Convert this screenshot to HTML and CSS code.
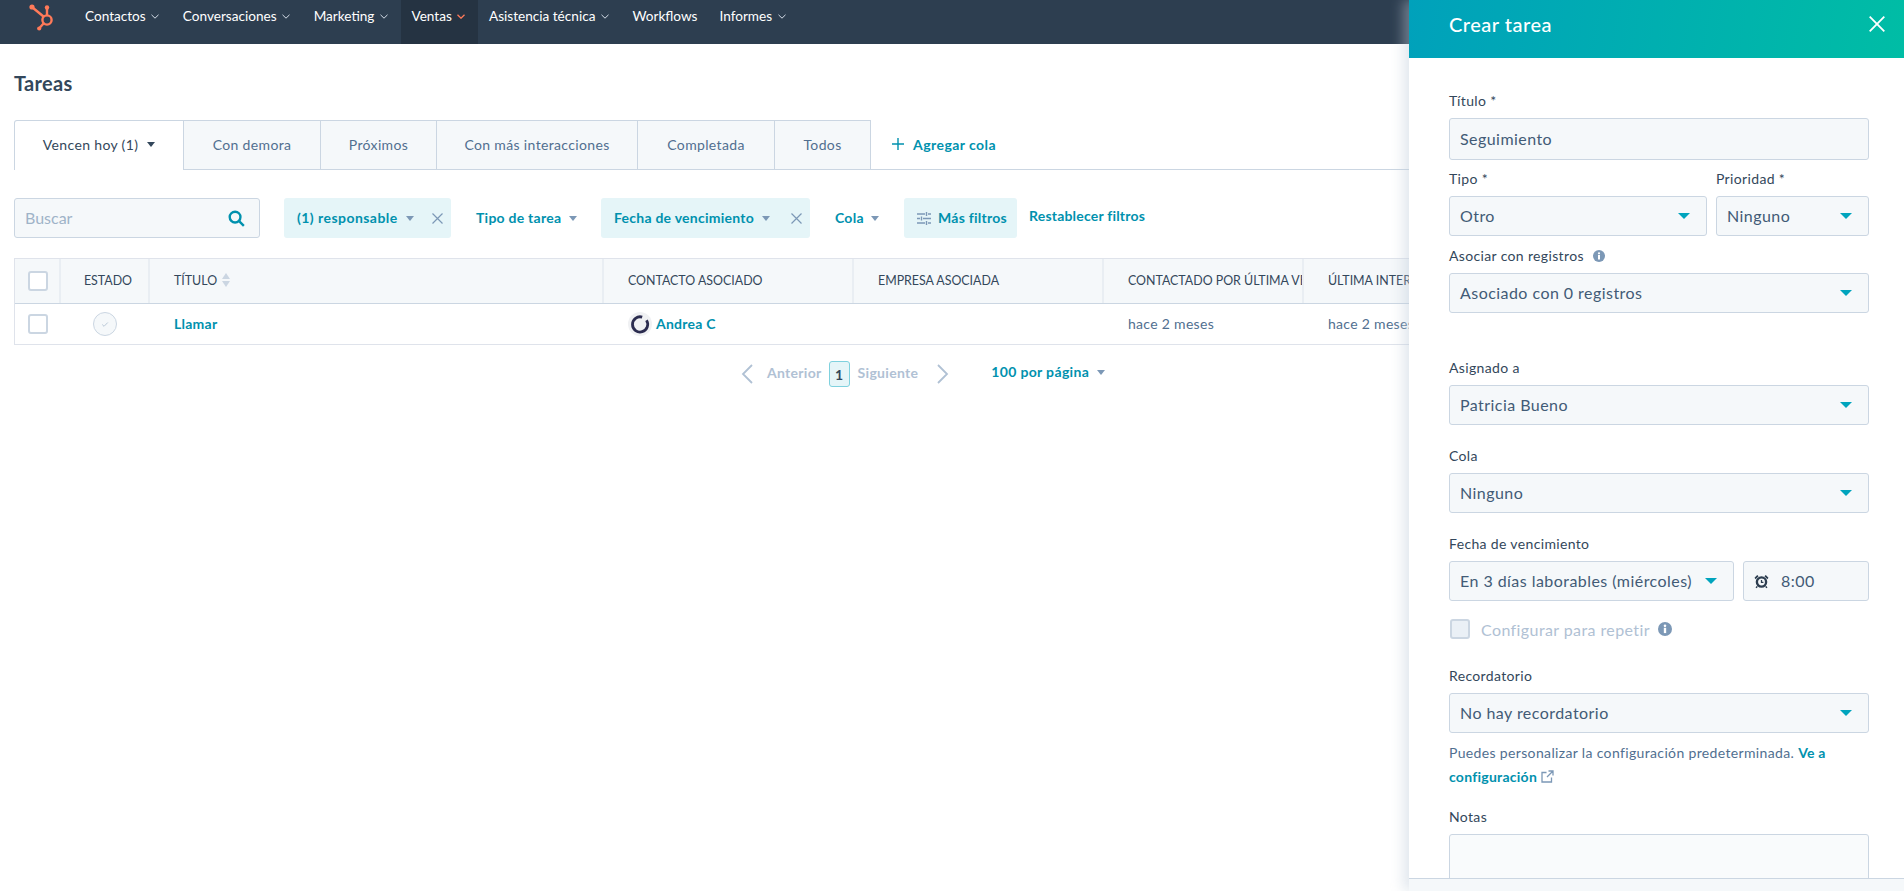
FILE: index.html
```html
<!DOCTYPE html>
<html lang="es">
<head>
<meta charset="utf-8">
<title>Tareas</title>
<link rel="stylesheet" href="styles.css">
</head>
<body>
<header class="nav">
  <svg class="logo" viewBox="0 0 32 30" width="32" height="30"><g fill="none" stroke="#ff7a59" stroke-width="2.4" stroke-linecap="round"><circle cx="21" cy="19" r="4.6"/><path d="M6.5 6.5 17.5 15.5"/><path d="M21 6.5V14"/><path d="M17.5 22.5 13.5 27"/></g><g fill="#ff7a59"><circle cx="6" cy="6" r="2.6"/><circle cx="21" cy="6.5" r="2.2"/><circle cx="13.2" cy="27.5" r="2.1"/></g></svg>
  <nav class="nav-items">
    <a class="nav-item">Contactos <svg class="chev" viewBox="0 0 8 5"><path d="M.5.8 4 4.2 7.5.8"/></svg></a>
    <a class="nav-item">Conversaciones <svg class="chev" viewBox="0 0 8 5"><path d="M.5.8 4 4.2 7.5.8"/></svg></a>
    <a class="nav-item">Marketing <svg class="chev" viewBox="0 0 8 5"><path d="M.5.8 4 4.2 7.5.8"/></svg></a>
    <a class="nav-item active">Ventas <svg class="chev" viewBox="0 0 8 5"><path d="M.5.8 4 4.2 7.5.8"/></svg></a>
    <a class="nav-item">Asistencia técnica <svg class="chev" viewBox="0 0 8 5"><path d="M.5.8 4 4.2 7.5.8"/></svg></a>
    <a class="nav-item nav-plain">Workflows</a>
    <a class="nav-item">Informes <svg class="chev" viewBox="0 0 8 5"><path d="M.5.8 4 4.2 7.5.8"/></svg></a>
  </nav>
</header>

<main class="main">
  <h1 class="title">Tareas</h1>

  <div class="tabs">
    <div class="tab tab-active w1">Vencen hoy (1) <span class="tri tri-dark"></span></div>
    <div class="tab w2">Con demora</div>
    <div class="tab w3">Próximos</div>
    <div class="tab w4">Con más interacciones</div>
    <div class="tab w5">Completada</div>
    <div class="tab w6">Todos</div>
    <a class="add-queue"><svg class="plus" viewBox="0 0 12 12"><path d="M6 0v12M0 6h12"/></svg>Agregar cola</a>
  </div>

  <div class="filters">
    <div class="search"><span>Buscar</span><svg class="search-icon" viewBox="0 0 18 18"><circle cx="7.5" cy="7.5" r="5.7"/><path d="m12 12 4.8 4.8"/></svg></div>
    <div class="filter chip c1">(1) responsable <span class="tri"></span><svg class="x" viewBox="0 0 11 11"><path d="m.5.5 10 10M10.500.5l-10 10"/></svg></div>
    <div class="filter c4">Tipo de tarea <span class="tri"></span></div>
    <div class="filter chip c2">Fecha de vencimiento <span class="tri"></span><svg class="x" viewBox="0 0 11 11"><path d="m.5.5 10 10M10.500.5l-10 10"/></svg></div>
    <div class="filter c5">Cola <span class="tri"></span></div>
    <div class="filter chip c3"><svg class="sliders" viewBox="0 0 14 13"><path d="M0 2h8M11 2h3M0 6.500h3M6 6.500h8M0 11h8M11 11h3M9.500 0v4M4.500 4.500v4M9.500 9v4"/></svg>Más filtros</div>
    <a class="reset">Restablecer filtros</a>
  </div>

  <div class="table">
    <div class="row head">
      <div class="cell cell-check"><span class="check"></span></div>
      <div class="cell cell-center cell-estado">ESTADO</div>
      <div class="cell">TÍTULO <span class="sort"><i class="up"></i><i class="down"></i></span></div>
      <div class="cell">CONTACTO ASOCIADO</div>
      <div class="cell">EMPRESA ASOCIADA</div>
      <div class="cell">CONTACTADO POR ÚLTIMA VEZ</div>
      <div class="cell">ÚLTIMA INTERACCIÓN</div>
    </div>
    <div class="row body-row">
      <div class="cell cell-check"><span class="check"></span></div>
      <div class="cell cell-center cell-status"><span class="status"><svg viewBox="0 0 10 8"><path d="m1.500 4 2.300 2.300 4.700-4.800"/></svg></span></div>
      <div class="cell cell-text"><a class="link">Llamar</a></div>
      <div class="cell"><svg class="avatar" viewBox="0 0 24 24"><circle cx="12" cy="12" r="12" fill="#f0f1f3"/><path d="M18.500 8.300a7.600 7.600 0 1 1-4.300-3.200" fill="none" stroke="#2b2c4f" stroke-width="2.800"/></svg><a class="link link-name">Andrea C</a></div>
      <div class="cell"></div>
      <div class="cell cell-text">hace 2 meses</div>
      <div class="cell cell-text">hace 2 meses</div>
    </div>
  </div>

  <div class="pager">
    <svg class="pg-chev" viewBox="0 0 12 20"><path d="M11 1 2 10l9 9"/></svg>
    <span class="pg-text pg-prev">Anterior</span>
    <span class="pg-num">1</span>
    <span class="pg-text pg-next">Siguiente</span>
    <svg class="pg-chev" viewBox="0 0 12 20"><path d="m1 1 9 9-9 9"/></svg>
    <span class="per-page">100 por página <span class="tri"></span></span>
  </div>
</main>

<aside class="panel">
  <div class="panel-head">
    <h2>Crear tarea</h2>
    <svg class="close" viewBox="0 0 16 16"><path d="m.7.700 14.600 14.600M15.300.7.700 15.300"/></svg>
  </div>
  <form class="panel-body">
    <label class="label">Título *</label>
    <div class="input tall">Seguimiento</div>

    <div class="two g1">
      <div class="col-tipo">
        <label class="label">Tipo *</label>
        <div class="input select">Otro<span class="caret"></span></div>
      </div>
      <div class="col-prio">
        <label class="label">Prioridad *</label>
        <div class="input select">Ninguno<span class="caret"></span></div>
      </div>
    </div>

    <label class="label g2">Asociar con registros <svg class="info info-s" viewBox="0 0 12 12"><circle cx="6" cy="6" r="6"/><rect x="5" y="5" width="2" height="4.500" fill="#fff"/><circle cx="6" cy="3.300" r="1.100" fill="#fff"/></svg></label>
    <div class="input select">Asociado con 0 registros<span class="caret"></span></div>

    <label class="label g3">Asignado a</label>
    <div class="input select">Patricia Bueno<span class="caret"></span></div>

    <label class="label g2b">Cola</label>
    <div class="input select">Ninguno<span class="caret"></span></div>

    <label class="label g2b">Fecha de vencimiento</label>
    <div class="two">
      <div class="input select col-date">En 3 días laborables (miércoles)<span class="caret"></span></div>
      <div class="input col-time"><svg class="alarm" viewBox="0 0 14 14"><circle cx="7" cy="7.500" r="4.300" fill="none" stroke="#2d3e50" stroke-width="2.200"/><path d="M7 5.500v2.300h1.800" fill="none" stroke="#2d3e50" stroke-width="1.200"/><path d="M.5 3.500 3 1l1.300 1L1.500 4.800zM13.500 3.500 11 1 9.700 2l2.800 2.800z" fill="#2d3e50"/><path d="m3 11.500-1 1.500M11 11.500l1 1.500" stroke="#2d3e50" stroke-width="1.400"/></svg>8:00</div>
    </div>

    <div class="repeat"><span class="check check-off"></span><span class="repeat-text">Configurar para repetir</span><svg class="info" viewBox="0 0 12 12"><circle cx="6" cy="6" r="6"/><rect x="5" y="5" width="2" height="4.500" fill="#fff"/><circle cx="6" cy="3.300" r="1.100" fill="#fff"/></svg></div>

    <label class="label g4">Recordatorio</label>
    <div class="input select">No hay recordatorio<span class="caret"></span></div>

    <p class="help">Puedes personalizar la configuración predeterminada. <a class="link">Ve a</a> <a class="link">configuración <svg class="ext" viewBox="0 0 13 13"><path d="M10.500 7.500V12H1V2.500h4.500M7.500 1H12v4.500M12 1 6 7"/></svg></a></p>

    <label class="label g5">Notas</label>
    <div class="textarea"></div>
  </form>
  <div class="panel-foot"></div>
</aside>
</body>
</html>
```

FILE: styles.css
```css
* { box-sizing: border-box; }
html, body { height: 100%; }
body {
  margin: 0;
  overflow: hidden;
  background: #fff;
  color: #33475b;
  font-family: Lato, "Open Sans", sans-serif;
  font-size: 14px;
  position: relative;
}
a { color: inherit; text-decoration: none; }

/* Top navigation */
.nav {
  height: 44px;
  background: #2d3e50;
  display: flex;
  color: #fff;
}
.logo { margin: 1px 0 0 26px; flex: none; }
.nav-items { display: flex; margin-left: 16px; }
.nav-item {
  display: flex;
  align-items: center;
  height: 44px;
  padding: 0 12.6px 13px 11px;
  white-space: pre;
  font-size: 13.6px;
}
.nav-plain { padding-right: 11px; }
.nav-item.active { background: #253342; }
.chev { width: 8px; height: 5px; margin-left: 2px; margin-top: 2px; fill: none; stroke: #d5dee8; stroke-width: 1; }
.active .chev { stroke: #ff7a59; stroke-width: 1.3; }

/* Main */
.main { padding: 0 0 0 14px; width: 1904px; }
.title { margin: 24px 0 22px; font-size: 20px; line-height: 30px; font-weight: 700; letter-spacing: .3px; }

.tabs {
  display: flex;
  height: 50px;
  border-bottom: 1px solid #cbd6e2;
  align-items: stretch;
}
.tab {
  height: 50px;
  padding-bottom: 2px;
  background: #f5f8fa;
  border: 1px solid #cbd6e2;
  border-left: 0;
  display: flex;
  align-items: center;
  justify-content: center;
  color: #516f90;
  white-space: pre;
  letter-spacing: .35px;
}
.tab-active {
  background: #fff;
  color: #33475b;
  border-left: 1px solid #cbd6e2;
  border-bottom: 0;
  border-radius: 3px 0 0 0;
}
.w1 { width: 170px; }
.w2 { width: 137px; }
.w3 { width: 116px; }
.w4 { width: 201px; }
.w5 { width: 137px; }
.w6 { width: 96px; }
.add-queue {
  display: flex;
  align-items: center;
  margin-left: 21px;
  padding-bottom: 1px;
  color: #0091ae;
  font-weight: 700;
  letter-spacing: .45px;
}
.plus { width: 12px; height: 12px; margin-right: 9px; fill: none; stroke: #0091ae; stroke-width: 1.4; }

.tri {
  display: inline-block;
  width: 0;
  height: 0;
  margin-left: 4px;
  border: 4px solid transparent;
  border-top: 5px solid #7c98b6;
  border-bottom: 0;
  vertical-align: 2px;
}
.tri-dark { border-top-color: #33475b; margin-left: 5px; }

/* Filters */
.filters { display: flex; gap: 13px; margin-top: 28px; height: 40px; align-items: stretch; }
.search {
  width: 246px;
  margin-right: 11px;
  background: #f5f8fa;
  border: 1px solid #cbd6e2;
  border-radius: 3px;
  display: flex;
  align-items: center;
  justify-content: space-between;
  padding: 0 14px 2px 10px;
  color: #9fb3c8;
  font-size: 16px;
}
.search-icon { width: 17px; height: 17px; margin-top: 2px; fill: none; stroke: #0091ae; stroke-width: 2.5; }
.filter {
  display: flex;
  align-items: center;
  padding: 0 12px 2px;
  color: #0091ae;
  font-weight: 700;
  white-space: pre;
  letter-spacing: .25px;
}
.filter .tri { margin-top: 2px; }
.chip { background: #e5f5f8; border-radius: 3px; }
.c1 { width: 167px; letter-spacing: .45px; padding-left: 13px; }
.c2 { width: 209px; padding-left: 13px; }
.c3 { width: 113px; padding: 0 0 2px 13px; }
.c4 { width: 124px; }
.c5 { width: 68px; }
.x { width: 11px; height: 11px; margin: 2px -4px 0 auto; fill: none; stroke: #7c98b6; stroke-width: 1.2; }
.sliders { width: 14px; height: 13px; margin: 2px 7px 0 0; flex: none; fill: none; stroke: #7c98b6; stroke-width: 1.4; }
.reset { margin-left: -1px; color: #0091ae; font-weight: 700; line-height: 36px; white-space: pre; letter-spacing: .2px; }

/* Table */
.table { margin-top: 20px; width: 1700px; border: 1px solid #dfe3eb; }
.row { display: grid; grid-template-columns: 46px 89px 454px 250px 250px 200px 1fr; }
.head { height: 45px; background: #f5f8fa; border-bottom: 1px solid #cbd6e2; font-size: 12.4px; }
.body-row { height: 40px; }
.cell {
  display: flex;
  align-items: center;
  padding-left: 24px;
  overflow: hidden;
  white-space: pre;
}
.head .cell { border-right: 2px solid #e9eef3; padding-bottom: 2px; }
.head .cell:last-child { border-right: 0; }
.body-row .cell { color: #516f90; letter-spacing: .3px; }
.cell-check { padding-left: 13px; }
.head .cell-check { padding-bottom: 0; }
.cell-center { justify-content: center; padding-left: 0; }
.cell-estado { padding-left: 7px; }
.cell-status { padding-right: 2px; }
.cell-text { padding-bottom: 2px; }
.link-name { padding-bottom: 2px; }
.check {
  display: block;
  width: 20px;
  height: 20px;
  background: #fff;
  border: 2px solid #cbd6e2;
  border-radius: 3px;
  flex: none;
}
.sort { display: inline-flex; flex-direction: column; gap: 2px; margin-left: 2px; }
.sort i { width: 0; height: 0; border: 4.500px solid transparent; }
.sort .up { border-top: 0; border-bottom: 6px solid #cbd6e2; }
.sort .down { border-bottom: 0; border-top: 6px solid #cbd6e2; }
.status {
  width: 24px;
  height: 24px;
  border-radius: 50%;
  background: #f5f8fa;
  border: 1px solid #cbd6e2;
  display: flex;
  align-items: center;
  justify-content: center;
}
.status svg { width: 8px; height: 7px; fill: none; stroke: #a9bbcd; stroke-width: 1; }
.avatar { width: 24px; height: 24px; margin-right: 4px; flex: none; }
.link { color: #0091ae; font-weight: 700; letter-spacing: .25px; }

/* Pager */
.pager { display: flex; align-items: center; margin: 16px 0 0 727px; height: 26px; }
.pg-chev { width: 12px; height: 20px; fill: none; stroke: #b0c1d4; stroke-width: 1.8; flex: none; }
.pg-text { color: #b0c1d4; font-weight: 700; letter-spacing: .3px; padding-bottom: 3px; }
.pg-prev { margin: 0 7px 0 14px; }
.pg-next { margin: 0 19px 0 8px; }
.pg-num {
  width: 21px;
  height: 26px;
  border: 1px solid #7fd1de;
  border-radius: 3px;
  background: #e5f5f8;
  color: #33475b;
  font-weight: 700;
  display: flex;
  align-items: center;
  justify-content: center;
}
.per-page { margin: -5px 0 0 42px; color: #0091ae; font-weight: 700; letter-spacing: .35px; white-space: pre; }

/* Side panel: an overlay on top of the page */
.panel {
  position: absolute;
  top: 0;
  right: 0;
  bottom: 0;
  width: 495px;
  background: #fff;
  box-shadow: -6px 0 12px rgba(190, 203, 218, .45);
  display: flex;
  flex-direction: column;
}
.panel-head {
  height: 58px;
  flex: none;
  padding: 0 19px 10px 40px;
  display: flex;
  align-items: center;
  justify-content: space-between;
  color: #fff;
  background: linear-gradient(100deg, #00a1bb 0%, #00bda5 100%);
}
.panel-head h2 { margin: 0; font-size: 20px; font-weight: 500; letter-spacing: .5px; }
.close { width: 16px; height: 16px; fill: none; stroke: #fff; stroke-width: 1.8; }
.panel-body { flex: 1; padding: 33px 35px 0 40px; overflow: hidden; }
.panel-foot { height: 13px; flex: none; background: #f5f8fa; border-top: 1px solid #cbd6e2; }

.label { display: block; line-height: 20px; margin-bottom: 7px; letter-spacing: .35px; }
.input {
  display: flex;
  align-items: center;
  height: 40px;
  padding: 0 10px 2px;
  background: #f5f8fa;
  border: 1px solid #cbd6e2;
  border-radius: 3px;
  color: #425b76;
  font-size: 16px;
  letter-spacing: .45px;
  white-space: pre;
}
.tall { height: 42px; }
.select { justify-content: space-between; padding-right: 16px; }
.caret {
  width: 0;
  height: 0;
  margin-top: 2px;
  border: 6px solid transparent;
  border-top: 6px solid #00a4bd;
  border-bottom: 0;
}
.two { display: flex; gap: 9px; }
.col-tipo { width: 258px; }
.col-prio { width: 153px; }
.col-date { width: 285px; }
.col-time { width: 126px; }
.g1 { margin-top: 9px; }
.g2 { margin-top: 10px; }
.g2b { margin-top: 21px; }
.g3 { margin-top: 45px; }
.g4 { margin-top: 27px; }
.g5 { margin-top: 19px; }
.info { width: 14px; height: 14px; fill: #7c98b6; margin-left: 8px; flex: none; }
.info-s { width: 12px; height: 12px; vertical-align: -1px; margin-left: 5px; }
.alarm { width: 15px; height: 15px; margin: 2px 12px 0 0; flex: none; }
.repeat { display: flex; align-items: center; margin-top: 18px; padding-left: 1px; height: 20px; }
.check-off { background: #eaf0f6; }
.repeat-text { margin-left: 11px; font-size: 16px; color: #b0c1d4; letter-spacing: .4px; }
.help { margin: 8px 0 0; line-height: 23.5px; color: #516f90; letter-spacing: .35px; }
.help .link { letter-spacing: .25px; }
.ext { width: 13px; height: 13px; margin-left: 0; vertical-align: -1px; fill: none; stroke: #7c98b6; stroke-width: 1.3; }
.textarea { height: 80px; border: 1px solid #cbd6e2; border-radius: 3px; background: #f9fbfc; }
```
